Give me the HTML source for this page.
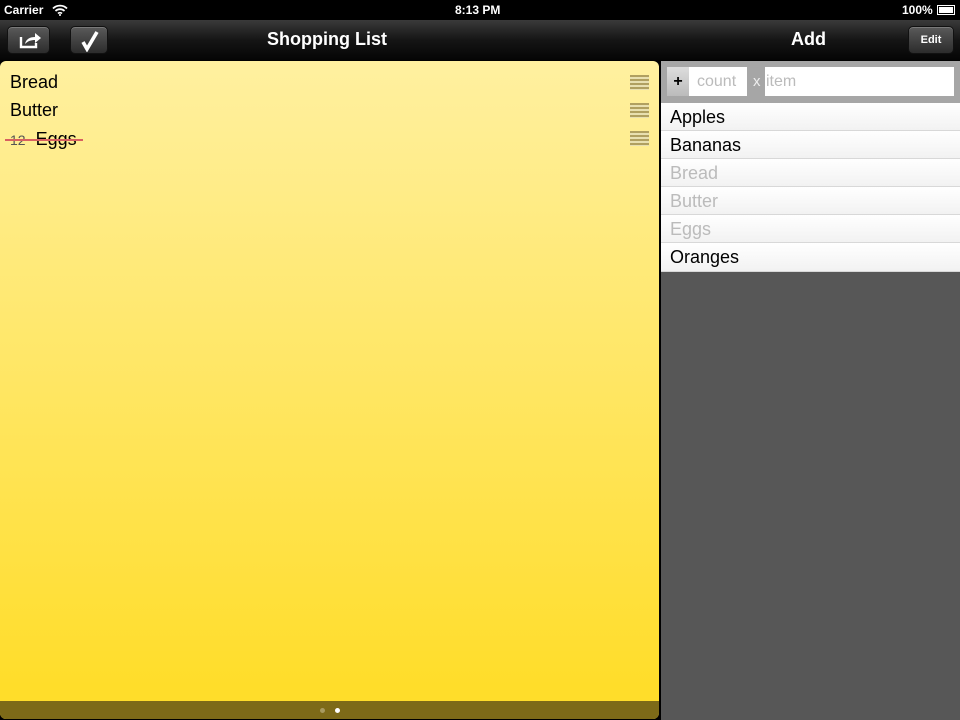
<!DOCTYPE html>
<html><head><style>
*{margin:0;padding:0;box-sizing:border-box}
body{width:960px;height:720px;background:#000;font-family:"Liberation Sans",sans-serif;position:relative;overflow:hidden}
.abs{position:absolute}
.status{top:0;left:0;width:960px;height:20px;background:#000;color:#fff;font-size:12px;font-weight:bold}
.nav{top:20px;left:0;width:960px;height:40px;background:linear-gradient(#3a3a3a,#151515 50%,#050505)}
.btn{position:absolute;top:6px;height:28px;border-radius:5px;background:linear-gradient(#5a5a5a,#2c2c2c);border:1px solid #111;box-shadow:inset 0 1px 0 rgba(255,255,255,.2)}
.title{position:absolute;color:#fff;font-weight:bold;font-size:18px;top:9px}
.yellow{top:61px;left:0;width:659px;height:658px;background:linear-gradient(#fff0a0,#ffdd2a 95%);border-radius:6px 6px 6px 6px;overflow:hidden}
.item{position:absolute;left:10px;font-size:18px;color:#000}
.grip{position:absolute;left:630px;width:19px;height:15px;background:repeating-linear-gradient(#b0a060 0,#b0a060 2px,#e8e0b0 2px,#e8e0b0 4px)}
.right{top:61px;left:661px;width:299px;height:659px;background:#575757}
.row{position:absolute;left:0;width:299px;height:28px;background:linear-gradient(#fff,#f2f2f2);border-bottom:1px solid #d8d8d8;font-size:18px;padding:4px 0 0 9px}
</style></head><body>
<div class="abs status"><span class="abs" style="left:4px;top:3px">Carrier</span>
<svg class="abs" style="left:52px;top:4px" width="16" height="12" viewBox="0 0 16 12"><path d="M1 4.5a10 10 0 0 1 14 0M3.5 7a6.5 6.5 0 0 1 9 0M6 9.5a3 3 0 0 1 4 0" stroke="#fff" stroke-width="1.8" fill="none"/><circle cx="8" cy="11" r="1" fill="#fff"/></svg>
<span class="abs" style="left:455px;top:3px">8:13 PM</span>
<span class="abs" style="left:902px;top:3px">100%</span>
<div class="abs" style="left:937px;top:5px;width:18px;height:10px;border:1px solid #fff;padding:1px"><div style="background:#fff;width:100%;height:100%"></div></div>
</div>
<div class="abs nav">
<div class="btn" style="left:7px;width:43px"><svg style="position:absolute;left:11px;top:4px" width="22" height="18" viewBox="0 0 22 18"><path d="M2 6v10h15v-4" stroke="#fff" stroke-width="2.4" fill="none"/><path d="M6 13c1-5 5-7 10-7V2l6 5-6 5V9c-4 0-7 1-10 4z" fill="#fff"/></svg></div>
<div class="btn" style="left:70px;width:38px"><svg style="position:absolute;left:9px;top:3px" width="20" height="22" viewBox="0 0 20 22"><path d="M3 12l4 7L17 2" stroke="#fff" stroke-width="3.6" fill="none"/></svg></div>
<div class="title" style="left:267px">Shopping List</div>
<div class="title" style="left:791px">Add</div>
<div class="btn" style="left:908px;width:46px;color:#fff;font-size:11px;font-weight:bold;text-align:center;line-height:26px">Edit</div>
</div>
<div class="abs yellow">
<div class="item" style="top:11px">Bread</div>
<div class="item" style="top:39px">Butter</div>
<div class="item" style="top:68px"><span style="font-size:14px;color:#555">12</span>&nbsp; Eggs</div>
<div class="abs" style="left:5px;top:78px;width:78px;height:2px;background:#d86060"></div>
<div class="grip" style="top:14px"></div><div class="grip" style="top:42px"></div><div class="grip" style="top:70px"></div>
<div class="abs" style="left:0;top:640px;width:659px;height:18px;background:#7d6a18"></div>
<div class="abs" style="left:320px;top:647px;width:5px;height:5px;border-radius:50%;background:#a89a60"></div>
<div class="abs" style="left:335px;top:647px;width:5px;height:5px;border-radius:50%;background:#fff"></div>
</div>
<div class="abs right">
<div class="abs" style="left:0;top:0;width:299px;height:42px;background:#a6a6a6"></div>
<div class="abs" style="left:6px;top:6px;width:22px;height:29px;background:linear-gradient(#ddd,#bbb);font-size:16px;font-weight:bold;text-align:center;line-height:29px">+</div>
<div class="abs" style="left:28px;top:6px;width:58px;height:29px;background:#fff;color:#bbb;font-size:16px;line-height:29px;padding-left:8px">count</div>
<div class="abs" style="left:92px;top:6px;color:#eee;font-size:15px;line-height:29px">x</div>
<div class="abs" style="left:104px;top:6px;width:189px;height:29px;background:#fff;color:#bbb;font-size:16px;line-height:29px;padding-left:1px">item</div>
<div class="row" style="top:42px">Apples</div>
<div class="row" style="top:70px">Bananas</div>
<div class="row" style="top:98px;color:#bbb">Bread</div>
<div class="row" style="top:126px;color:#bbb">Butter</div>
<div class="row" style="top:154px;color:#bbb">Eggs</div>
<div class="row" style="top:182px;height:29px">Oranges</div>
</div>
</body></html>
